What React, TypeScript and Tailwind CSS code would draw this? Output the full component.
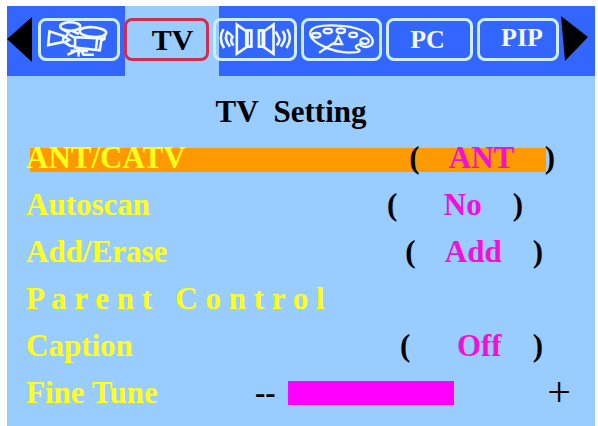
import { useState } from 'react'
import type { ReactNode } from 'react'
import clsx from 'clsx'

function CameraIcon() {
  return (
    <svg viewBox="128 60 224 114" className="h-full w-full" fill="none" stroke="currentColor" strokeWidth="8" aria-hidden="true">
      <path d="M149 92 L145 134 L190 125 L193 106 Z" />
      <ellipse cx="213" cy="77" rx="31" ry="13" />
      <ellipse cx="283" cy="94" rx="41" ry="15" transform="rotate(4 283 94)" />
      <path d="M188 84 L208 96 L198 110 L210 118 L196 126 L212 136 L228 138" />
      <path d="M218 90 L240 100 M210 102 L228 112" />
      <path d="M228 106 V142 L304 150 L310 114 L232 110 M296 114 L292 148" />
      <path d="M320 100 L318 116 L308 120" />
      <path d="M204 164 L240 148 L238 170 M246 150 L254 164 L286 164 M214 152 H268" />
    </svg>
  )
}

function SpeakersIcon() {
  return (
    <svg viewBox="50 59 226 114" className="h-full w-full" fill="none" stroke="currentColor" strokeWidth="8" aria-hidden="true">
      <path d="M107 70 L136 90 V140 L107 160 Z M140 88 H152 V138 H140 Z" />
      <path d="M220 70 L191 90 V140 L220 160 Z M175 88 H187 V138 H175 Z" />
      <path d="M66 84 Q48 112 68 142 M80 90 Q64 112 86 138 M97 134 Q84 120 94 108 Q88 98 78 94" />
      <path d="M262 84 Q280 112 260 142 M248 90 Q264 112 242 138 M230 134 Q244 118 234 106 Q232 98 226 92" />
    </svg>
  )
}

function PaletteIcon() {
  return (
    <svg viewBox="312 59 226 114" className="h-full w-full" fill="none" stroke="currentColor" strokeWidth="7" aria-hidden="true">
      <path d="M356 157 L402 126 M372 138 C342 126 322 106 330 90 C338 74 372 71 412 73 C468 74 514 94 521 118 C524 134 508 142 492 138 C478 134 480 124 492 126 M372 138 C396 150 424 157 456 156 C488 156 484 148 472 144 C464 138 474 130 486 130" />
      <ellipse cx="347" cy="103" rx="13" ry="7" />
      <ellipse cx="383" cy="90" rx="13" ry="7" />
      <ellipse cx="423" cy="89" rx="13" ry="7" />
      <ellipse cx="461" cy="102" rx="12" ry="7" />
      <ellipse cx="496" cy="121" rx="13" ry="9" />
      <path d="M415 106 L403 130 H427 Z" />
    </svg>
  )
}

type Tab = { id: string; content: ReactNode; className?: string }

const tabs: Tab[] = [
  { id: 'Picture', content: <CameraIcon /> },
  { id: 'TV', content: 'TV', className: 'pl-3 text-3xl' },
  { id: 'Audio', content: <SpeakersIcon /> },
  { id: 'Color', content: <PaletteIcon /> },
  { id: 'PC', content: 'PC', className: 'pr-1 text-[26px]' },
  { id: 'PIP', content: 'PIP', className: 'pb-1 pl-2 text-[26px]' },
]

const rows = [
  { label: 'ANT/CATV', before: '(    ', value: 'ANT', after: '    )', className: 'pr-10' },
  { label: 'Autoscan', before: '(      ', value: 'No', after: '    )', className: 'pr-[72px]' },
  { label: 'Add/Erase', before: '(    ', value: 'Add', after: '    )', className: 'pr-[52px]' },
  { label: 'P a r e n t   C o n t r o l' },
  { label: 'Caption', before: '(      ', value: 'Off', after: '    )', className: 'pr-[52px]' },
]

export default function App() {
  const [activeTab, setActiveTab] = useState('TV')
  const [selected, setSelected] = useState('ANT/CATV')
  const [tune, setTune] = useState(64)

  return (
    <div className="flex min-h-screen flex-col bg-white pt-1.5 pr-[3px] pl-[7px] font-['Liberation_Serif',serif] font-bold">
      <main className="flex-1 bg-[#99ccff]">
        {/* Menu bar */}
        <header className="flex h-[70px] items-start bg-[linear-gradient(to_right,#3366ff_20%,#99ccff_20%,#99ccff_36%,#3366ff_36%)] pt-3 pr-[7px]">
          <button aria-label="Previous" className="-mt-px">
            <svg viewBox="0 0 25 45" className="h-[45px] w-[25px]" aria-hidden="true">
              <path d="M25 0 V45 L0 22 Z" />
            </svg>
          </button>
          <nav className="mr-0.5 ml-1.5 grid flex-1 grid-cols-[82fr_85fr_84fr_81fr_87fr_82fr] gap-1">
            {tabs.map((tab) => (
              <button
                key={tab.id}
                aria-label={tab.id}
                onClick={() => setActiveTab(tab.id)}
                className={clsx(
                  'flex h-[43px] items-center justify-center rounded-lg border-3',
                  activeTab === tab.id ? 'border-[#cc2f4f] text-black' : 'border-[#cdeeff] text-[#f0faff]',
                  tab.className
                )}
              >
                {tab.content}
              </button>
            ))}
          </nav>
          <button aria-label="Next" className="-mt-0.5">
            <svg viewBox="0 0 27 45" className="h-[45px] w-[27px]" aria-hidden="true">
              <path d="M0 0 L27 21 L4 45 Z" />
            </svg>
          </button>
        </header>

        <h1 className="pt-[18px] pr-5 pb-1 text-center text-[31px] leading-9 whitespace-pre">TV  Setting</h1>

        {/* Settings */}
        <div className="pb-2.5 pl-[19px] text-[31px] leading-[47px]">
          {rows.map((row) => (
            <div key={row.label} className="grid items-center">
              {selected === row.label && (
                <div className="col-start-1 row-start-1 mt-1 mr-[49px] ml-1 h-6 bg-[#ff9900]" />
              )}
              <button
                onClick={() => setSelected(row.label)}
                className={clsx('col-start-1 row-start-1 flex justify-between whitespace-pre', row.className)}
              >
                <span className="text-[#ffff1a]">{row.label}</span>
                {row.value && (
                  <span>
                    {row.before}
                    <span className="text-[#f010d8]">{row.value}</span>
                    {row.after}
                  </span>
                )}
              </button>
            </div>
          ))}

          <div className="flex h-[47px] items-center pr-6">
            <label htmlFor="fine-tune" className="w-[42%] text-[#ffff1a]">
              Fine Tune
            </label>
            <button aria-label="Decrease" onClick={() => setTune(Math.max(0, tune - 1))}>
              --
            </button>
            <input
              id="fine-tune"
              type="range"
              value={tune}
              onChange={(e) => setTune(Number(e.target.value))}
              className="ml-3 h-6 min-w-0 flex-1 appearance-none [&::-webkit-slider-thumb]:invisible"
              style={{ background: `linear-gradient(to right, #ff00ff ${tune}%, transparent ${tune}%)` }}
            />
            <button
              aria-label="Increase"
              onClick={() => setTune(Math.min(100, tune + 1))}
              className="text-[42px] font-normal"
            >
              +
            </button>
          </div>
        </div>
      </main>
    </div>
  )
}
